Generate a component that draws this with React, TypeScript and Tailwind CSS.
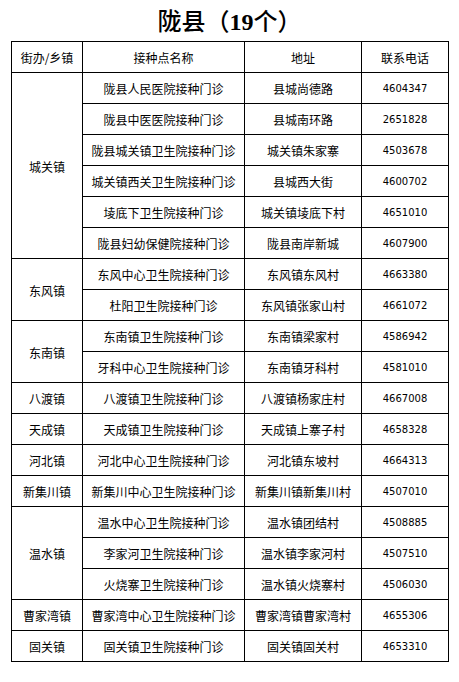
import React from "react";

type Site = { name: string; addr: string; tel: string };
type Town = { town: string; sites: Site[] };

const towns: Town[] = [
  {
    town: "城关镇",
    sites: [
      { name: "陇县人民医院接种门诊", addr: "县城尚德路", tel: "4604347" },
      { name: "陇县中医医院接种门诊", addr: "县城南环路", tel: "2651828" },
      { name: "陇县城关镇卫生院接种门诊", addr: "城关镇朱家寨", tel: "4503678" },
      { name: "城关镇西关卫生院接种门诊", addr: "县城西大街", tel: "4600702" },
      { name: "堎底下卫生院接种门诊", addr: "城关镇堎底下村", tel: "4651010" },
      { name: "陇县妇幼保健院接种门诊", addr: "陇县南岸新城", tel: "4607900" },
    ],
  },
  {
    town: "东风镇",
    sites: [
      { name: "东风中心卫生院接种门诊", addr: "东风镇东风村", tel: "4663380" },
      { name: "杜阳卫生院接种门诊", addr: "东风镇张家山村", tel: "4661072" },
    ],
  },
  {
    town: "东南镇",
    sites: [
      { name: "东南镇卫生院接种门诊", addr: "东南镇梁家村", tel: "4586942" },
      { name: "牙科中心卫生院接种门诊", addr: "东南镇牙科村", tel: "4581010" },
    ],
  },
  { town: "八渡镇", sites: [{ name: "八渡镇卫生院接种门诊", addr: "八渡镇杨家庄村", tel: "4667008" }] },
  { town: "天成镇", sites: [{ name: "天成镇卫生院接种门诊", addr: "天成镇上寨子村", tel: "4658328" }] },
  { town: "河北镇", sites: [{ name: "河北中心卫生院接种门诊", addr: "河北镇东坡村", tel: "4664313" }] },
  { town: "新集川镇", sites: [{ name: "新集川中心卫生院接种门诊", addr: "新集川镇新集川村", tel: "4507010" }] },
  {
    town: "温水镇",
    sites: [
      { name: "温水中心卫生院接种门诊", addr: "温水镇团结村", tel: "4508885" },
      { name: "李家河卫生院接种门诊", addr: "温水镇李家河村", tel: "4507510" },
      { name: "火烧寨卫生院接种门诊", addr: "温水镇火烧寨村", tel: "4506030" },
    ],
  },
  { town: "曹家湾镇", sites: [{ name: "曹家湾中心卫生院接种门诊", addr: "曹家湾镇曹家湾村", tel: "4655306" }] },
  { town: "固关镇", sites: [{ name: "固关镇卫生院接种门诊", addr: "固关镇固关村", tel: "4653310" }] },
];

const cjk = "font-['Noto_Sans_CJK_SC',sans-serif]";
const cell = "border border-black h-[31px] p-0 pt-[2px] text-center align-middle";

export default function App() {
  return (
    <div className={`w-[459px] min-h-[682px] bg-white text-black ${cjk}`}>
      <h1 className="h-[41px] flex items-center justify-center pt-[3px] text-[24px] font-medium leading-none font-['Liberation_Serif','Noto_Sans_CJK_SC',serif]">
        陇县（<span className="font-bold">19</span>个）
      </h1>
      <table className="ml-[11px] border-collapse table-fixed w-[437px] text-[12px] leading-none">
        <colgroup>
          <col className="w-[71px]" />
          <col className="w-[162px]" />
          <col className="w-[117px]" />
          <col className="w-[87px]" />
        </colgroup>
        <thead>
          <tr>
            <th className={`${cell} font-normal`}>街办/乡镇</th>
            <th className={`${cell} font-normal`}>接种点名称</th>
            <th className={`${cell} font-normal`}>地址</th>
            <th className={`${cell} font-normal`}>联系电话</th>
          </tr>
        </thead>
        <tbody>
          {towns.map((t) =>
            t.sites.map((s, i) => (
              <tr key={t.town + i}>
                {i === 0 && (
                  <td className={cell} rowSpan={t.sites.length}>
                    {t.town}
                  </td>
                )}
                <td className={`${cell} whitespace-nowrap`}>{s.name}</td>
                <td className={`${cell} whitespace-nowrap`}>{s.addr}</td>
                <td className={`${cell} text-[10px] font-['DejaVu_Sans',sans-serif]`}>{s.tel}</td>
              </tr>
            ))
          )}
        </tbody>
      </table>
    </div>
  );
}
